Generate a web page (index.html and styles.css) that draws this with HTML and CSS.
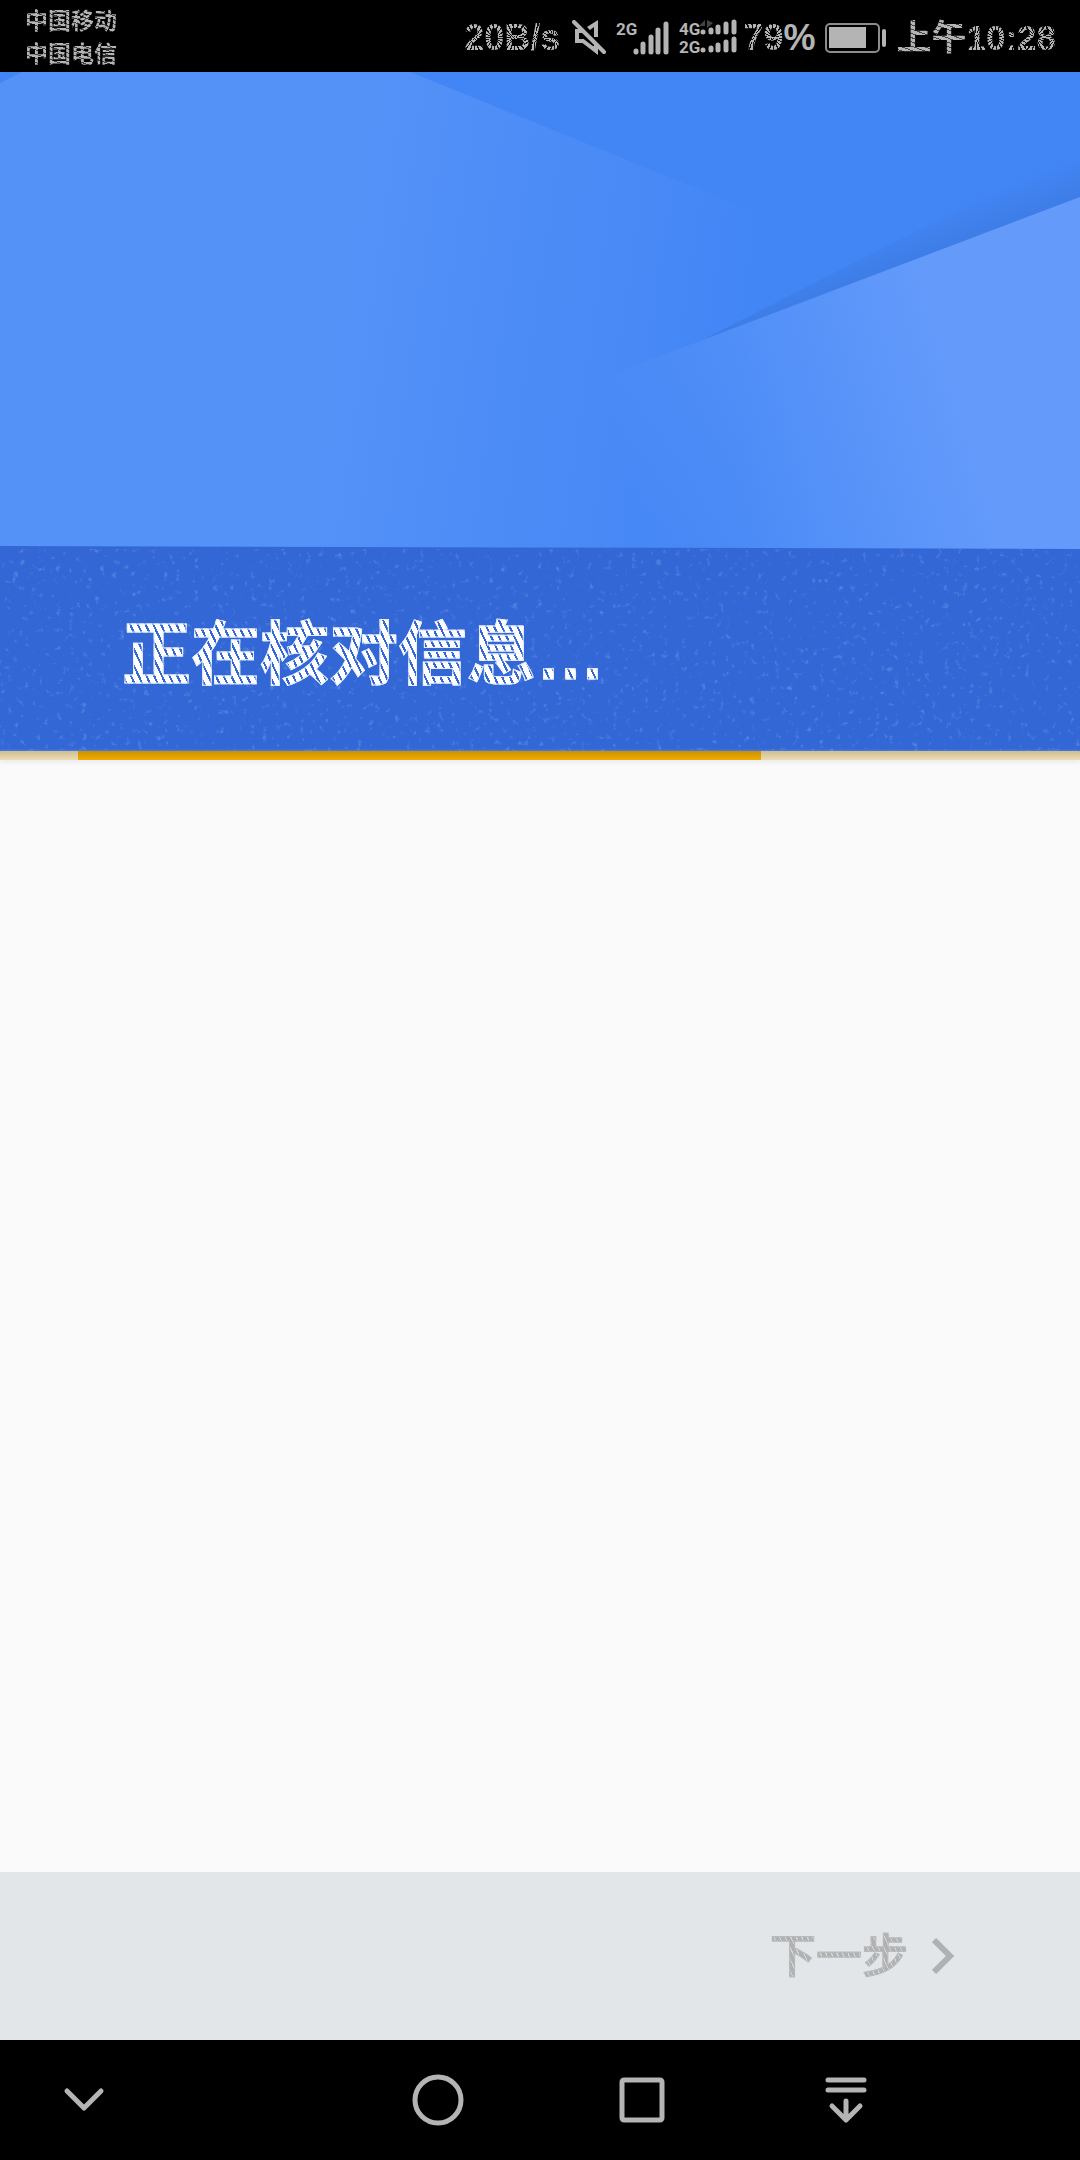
FILE: index.html
```html
<!DOCTYPE html>
<html lang="zh-CN">
<head>
    <meta charset="UTF-8">
    <meta name="viewport" content="width=device-width, initial-scale=1.0">
    <title>正在核对信息…</title>
    <link rel="stylesheet" href="styles.css">
</head>
<body>
    <div class="status-bar">
        <div class="carriers">
            <span>中国移动</span>
            <span>中国电信</span>
        </div>
        <div class="status-icons">
            <span class="speed rays">20B/s</span>
            <svg class="mute" width="34" height="36" viewBox="0 0 34 36">
                <path d="M11 11 H5 V21 H11 L24 31 V25" fill="none" stroke="#b4b4b4" stroke-width="4"/>
                <path d="M15 7 L26 0 V17 H22 V7 L18 10 Z M17 25 L25 27 V34 Z" fill="#b4b4b4"/>
                <path d="M2 2 L32 32" stroke="#b4b4b4" stroke-width="4" stroke-linecap="round"/>
            </svg>
            <svg class="signal" width="53" height="36" viewBox="0 0 53 36">
                <text x="0" y="15">2G</text>
                <path d="M20 31 V32 M27 24 V32 M35 17 V32 M42 10 V32 M50 4 V32"/>
            </svg>
            <svg class="signal dual" width="58" height="36" viewBox="0 0 58 36">
                <text x="0" y="15">4G</text>
                <text x="0" y="33">2G</text>
                <path class="traffic" d="M20 6 L26 0 V6 Z M28 0 V8 L34 3 Z"/>
                <path d="M24 12 V12 M32 10 V12 M39 7 V12 M47 4 V12 M55 2 V12 M24 30 V30 M32 28 V30 M39 25 V30 M47 22 V30 M55 19 V30"/>
            </svg>
            <span class="percent"><span class="rays">79</span>%</span>
            <svg class="battery" width="62" height="30" viewBox="0 0 62 30">
                <rect x="1" y="1" width="53" height="28" rx="4" fill="none" stroke="#8c8c8c" stroke-width="2"/>
                <rect x="4" y="4" width="37" height="21" fill="#b4b4b4"/>
                <rect x="57" y="6" width="4" height="18" rx="2" fill="#b4b4b4"/>
            </svg>
            <span class="clock"><span class="hatched">上午</span><span class="rays">10:28</span></span>
        </div>
    </div>

    <header class="banner">
        <svg class="banner-art" viewBox="0 0 1080 679" preserveAspectRatio="none">
            <defs>
                <linearGradient id="leftSheet" gradientUnits="userSpaceOnUse" x1="335" y1="176" x2="765" y2="239">
                    <stop offset="0" stop-color="#5592f8"/>
                    <stop offset="1" stop-color="#4285f5"/>
                </linearGradient>
                <linearGradient id="rightSheet" gradientUnits="userSpaceOnUse" x1="600" y1="315" x2="932" y2="215">
                    <stop offset="0" stop-color="#649bfb" stop-opacity="0"/>
                    <stop offset="1" stop-color="#649bfb"/>
                </linearGradient>
                <linearGradient id="foldShadow" gradientUnits="userSpaceOnUse" x1="1010" y1="152" x2="996" y2="115">
                    <stop offset="0" stop-color="#3e7de6"/>
                    <stop offset="1" stop-color="#3e7de6" stop-opacity="0"/>
                </linearGradient>
                <filter id="speckle" x="0" y="0" width="100%" height="100%">
                    <feTurbulence type="fractalNoise" baseFrequency="0.16" numOctaves="3" seed="4"/>
                    <feColorMatrix values="0 0 0 0 0.35  0 0 0 0 0.56  0 0 0 0 0.95  1.2 0 0 0 -0.76"/>
                </filter>
            </defs>
            <rect width="1080" height="679" fill="#4285f5"/>
            <path d="M0 11 L22 0 H410 L800 158 V480 H0 Z" fill="url(#leftSheet)"/>
            <path d="M700 269 L1080 125 V76 Z" fill="url(#foldShadow)"/>
            <path d="M592 310 L1080 125 V480 H592 Z" fill="url(#rightSheet)"/>
            <path d="M0 474 L1080 477 V679 H0 Z" fill="#3367d6"/>
            <rect y="477" width="1080" height="202" filter="url(#speckle)"/>
        </svg>
        <h1 class="title">正在核对信息…</h1>
    </header>
    <div class="progress" role="progressbar" aria-label="正在核对信息"><div class="progress-value"></div></div>

    <main class="content"></main>

    <footer class="actions">
        <button class="next" type="button" disabled>
            <span class="next-label">下一步</span>
            <svg width="24" height="36" viewBox="0 0 24 36">
                <path d="M2 2 L18 18 L2 34" fill="none" stroke="#b0b1b2" stroke-width="6"/>
            </svg>
        </button>
    </footer>

    <nav class="nav-bar">
        <button class="nav-hide" type="button" aria-label="隐藏">
            <svg width="60" height="60" viewBox="0 0 60 60"><path d="M13 21 L30 38 L47 21"/></svg>
        </button>
        <button class="nav-home" type="button" aria-label="主屏幕">
            <svg width="60" height="60" viewBox="0 0 60 60"><circle cx="30" cy="30" r="23"/></svg>
        </button>
        <button class="nav-recent" type="button" aria-label="最近任务">
            <svg width="60" height="60" viewBox="0 0 60 60"><rect x="10" y="10" width="40" height="40" rx="2"/></svg>
        </button>
        <button class="nav-pull" type="button" aria-label="通知">
            <svg width="60" height="60" viewBox="0 0 60 60"><path d="M12 10 H48 M12 20 H48 M30 31 V49 M16 36 L30 50 L44 36"/></svg>
        </button>
    </nav>
</body>
</html>
```
FILE: styles.css
```css
* {
    box-sizing: border-box;
}
body {
    display: flex;
    flex-direction: column;
    min-height: 100vh;
    margin: 0;
    background-color: #fafafa;
    font-family: "Liberation Sans", "Noto Sans CJK SC", sans-serif;
    font-weight: bold;
}
button {
    padding: 0;
    border: none;
    background: none;
    font: inherit;
}
svg {
    display: block;
    flex: none;
}
.status-bar {
    display: flex;
    justify-content: space-between;
    height: 72px;
    padding: 0 24px 0 25px;
    background-color: #000;
    color: #b4b4b4;
    white-space: nowrap;
}
.carriers {
    display: flex;
    flex-direction: column;
    padding-top: 5px;
    font-size: 23px;
    line-height: 33px;
}
.carriers span,
.hatched {
    background: repeating-linear-gradient(20deg, #b4b4b4 0 3px, #444 3px 4px);
    -webkit-background-clip: text;
    background-clip: text;
    color: transparent;
}
.status-icons {
    display: flex;
    align-items: center;
    padding-top: 4px;
    font-size: 36px;
    line-height: 44px;
}
/* strokes fan out from the middle of each digit */
.rays {
    background: repeating-conic-gradient(#b4b4b4 0 13deg, #111 13deg 20deg) 0 0 / 20px 100%;
    -webkit-background-clip: text;
    background-clip: text;
    color: transparent;
}
.mute {
    margin-left: 12px;
}
.signal {
    margin-left: 10px;
    overflow: visible;
    fill: none;
    stroke: #b4b4b4;
    stroke-width: 5px;
    stroke-linecap: round;
}
.signal text {
    fill: #b4b4b4;
    stroke: none;
    font-family: Roboto, "Liberation Sans", sans-serif;
    font-size: 17px;
}
.signal .traffic {
    fill: #444;
    stroke: none;
}
.percent {
    margin-left: 6px;
}
.battery {
    margin-left: 10px;
}
.clock {
    margin-left: 9px;
    font-size: 35px;
}
.banner {
    display: grid;
    aspect-ratio: 1080 / 679;
}
.banner-art {
    grid-area: 1 / 1;
    width: 100%;
    height: 100%;
}
.title {
    grid-area: 1 / 1;
    align-self: end;
    justify-self: start;
    z-index: 1;
    margin: 0 0 47px 122px;
    background: repeating-linear-gradient(65deg, #fff 0 5px, #3367d6 5px 7px);
    -webkit-background-clip: text;
    background-clip: text;
    color: transparent;
    -webkit-text-stroke: 1px #e8effc;
    font-size: 69px;
    line-height: 96px;
}
.progress {
    height: 9px;
    padding-left: 7.2%;
    background: linear-gradient(#cdbd92, #ecddb2);
    box-shadow: 0 2px 4px #e8e8e8;
}
.progress-value {
    width: 68.2%;
    height: 100%;
    background: linear-gradient(#ca9100, #eead00);
}
.content {
    flex: 1;
}
.actions {
    display: flex;
    align-items: center;
    justify-content: flex-end;
    height: 168px;
    padding-right: 124px;
    background-color: #e2e6e9;
}
.next {
    display: flex;
    align-items: center;
    gap: 24px;
    font-size: 46px;
    line-height: 60px;
}
.next-label {
    background: repeating-linear-gradient(65deg, #b0b1b2 0 4px, #d5d8da 4px 5px);
    -webkit-background-clip: text;
    background-clip: text;
    color: transparent;
    -webkit-text-stroke: 1px #b8babb;
    font-weight: 500;
}
.nav-bar {
    display: grid;
    grid-template-columns: 168fr 168fr 204fr 204fr 204fr 132fr;
    height: 120px;
    background-color: #000;
}
.nav-bar button {
    display: flex;
    align-items: center;
    justify-content: center;
}
.nav-bar svg {
    fill: none;
    stroke: #b4b4b4;
    stroke-width: 5px;
    stroke-linecap: round;
    stroke-linejoin: round;
}
.nav-home {
    grid-column: 3;
}
```
